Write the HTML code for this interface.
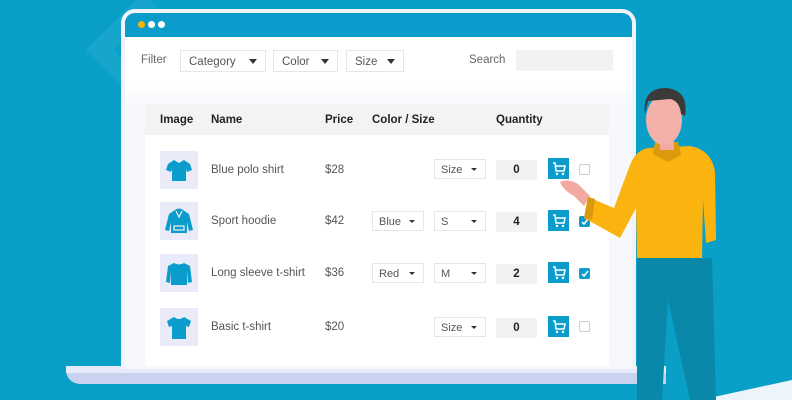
<!DOCTYPE html>
<html><head><meta charset="utf-8"><style>
*{margin:0;padding:0;box-sizing:border-box}
body{width:792px;height:400px;overflow:hidden;background:#099fc7;font-family:"Liberation Sans",sans-serif;position:relative}
.a{position:absolute}
.t{font-size:11.5px;color:#555}
.h{font-size:11.5px;font-weight:bold;color:#222}
.sel{position:absolute;height:20px;border:1px solid #e6e6e6;background:#fff;font-size:11px;color:#555;padding:4px 0 0 6px}
.sel:after{content:"";position:absolute;right:8px;top:8px;border-left:3px solid transparent;border-right:3px solid transparent;border-top:3px solid #333}
.big:after{border-left-width:4px;border-right-width:4px;border-top-width:5px;top:8px}
.qty{position:absolute;left:496px;width:41px;height:20px;background:#f2f2f2;font-size:11.5px;font-weight:bold;text-align:center;padding-top:4px;color:#222}
.cart{position:absolute;left:548px;width:21px;height:21px;background:#0a9ccb}
.img{position:absolute;left:160px;width:38px;height:38px;background:#e9ebf8}
.cb{position:absolute;left:579px;width:11px;height:11px;border:1px solid #ccc;border-radius:2px;background:#fff}
.cb.on{background:#0a9ccb;border-color:#0a9ccb}
</style></head><body>
<svg class="a" style="left:40px;top:0" width="240" height="140"><path d="M110 0 L60 50 L110 100 L160 50" fill="none" stroke="#2aadd1" stroke-width="20" opacity=".45"/></svg>
<div class="a" style="left:66px;top:366px;width:600px;height:18px;background:#c9d3f0;border-radius:0 0 0 14px"></div>
<div class="a" style="left:66px;top:366px;width:600px;height:7px;background:#e6eafa"></div>
<div class="a" style="left:121px;top:9px;width:515px;height:360px;background:#f0f3fb;border-radius:14px 14px 0 0"></div>
<div class="a" style="left:125px;top:13px;width:507px;height:24px;background:#0a9ccb;border-radius:10px 10px 0 0"></div>
<div class="a" style="left:138px;top:21px;width:7px;height:7px;border-radius:50%;background:#f4b400"></div>
<div class="a" style="left:148px;top:21px;width:7px;height:7px;border-radius:50%;background:#fff"></div>
<div class="a" style="left:158px;top:21px;width:7px;height:7px;border-radius:50%;background:#fff"></div>
<div class="a" style="left:125px;top:37px;width:507px;height:331px;background:linear-gradient(#fff 0,#fff 48px,#f6f8fc 70px)"></div>
<div class="a t" style="left:141px;top:54px;color:#666">Filter</div>
<div class="sel big" style="left:180px;top:50px;width:86px;height:22px;padding:5px 0 0 8px;font-size:11.5px">Category</div>
<div class="sel big" style="left:273px;top:50px;width:65px;height:22px;padding:5px 0 0 8px;font-size:11.5px">Color</div>
<div class="sel big" style="left:346px;top:50px;width:58px;height:22px;padding:5px 0 0 8px;font-size:11.5px">Size</div>
<div class="a t" style="left:469px;top:54px;color:#666">Search</div>
<div class="a" style="left:516px;top:50px;width:97px;height:21px;background:#f2f2f2"></div>
<div class="a" style="left:145px;top:104px;width:464px;height:262px;background:#fff"></div>
<div class="a" style="left:145px;top:104px;width:464px;height:31px;background:#f3f3f3"></div>
<div class="a h" style="left:160px;top:114px">Image</div>
<div class="a h" style="left:211px;top:114px">Name</div>
<div class="a h" style="left:325px;top:114px">Price</div>
<div class="a h" style="left:372px;top:114px">Color / Size</div>
<div class="a h" style="left:496px;top:114px">Quantity</div>

<div class="img" style="top:151px"><svg width="38" height="38"><path d="M14 9 L8 13 L6 19 L11 21 L12 18 L12 30 L26 30 L26 18 L27 21 L32 19 L30 13 L24 9 L19 12 Z" fill="#0a9ccb"/></svg></div>
<div class="img" style="top:202px"><svg width="38" height="38"><path d="M15 8 Q19 5 23 8 L29 12 L33 28 L29 29 L27 20 L27 31 L11 31 L11 20 L9 29 L5 28 L9 12 Z" fill="#0a9ccb"/><path d="M14 24 h10 v4 h-10z M16 9 L19 15 L22 9" fill="none" stroke="#e9ebf8" stroke-width="1.3"/></svg></div>
<div class="img" style="top:254px"><svg width="38" height="38"><path d="M14 9 L8 12 L6 28 L10 29 L11 17 L11 31 L27 31 L27 17 L28 29 L32 28 L30 12 L24 9 Q19 12 14 9Z" fill="#0a9ccb"/></svg></div>
<div class="img" style="top:308px"><svg width="38" height="38"><path d="M14 9 L7 13 L9 19 L12 18 L12 31 L26 31 L26 18 L29 19 L31 13 L24 9 Q19 13 14 9Z" fill="#0a9ccb"/></svg></div>

<div class="a t" style="left:211px;top:164px">Blue polo shirt</div><div class="a t" style="left:325px;top:164px">$28</div>
<div class="a t" style="left:211px;top:215px">Sport hoodie</div><div class="a t" style="left:325px;top:215px">$42</div>
<div class="a t" style="left:211px;top:267px">Long sleeve t-shirt</div><div class="a t" style="left:325px;top:267px">$36</div>
<div class="a t" style="left:211px;top:321px">Basic t-shirt</div><div class="a t" style="left:325px;top:321px">$20</div>

<div class="sel" style="left:434px;top:159px;width:52px">Size</div>
<div class="sel" style="left:372px;top:211px;width:52px">Blue</div><div class="sel" style="left:434px;top:211px;width:52px">S</div>
<div class="sel" style="left:372px;top:263px;width:52px">Red</div><div class="sel" style="left:434px;top:263px;width:52px">M</div>
<div class="sel" style="left:434px;top:317px;width:52px">Size</div>

<div class="qty" style="top:160px">0</div><div class="qty" style="top:212px">4</div><div class="qty" style="top:264px">2</div><div class="qty" style="top:318px">0</div>

<svg width="0" height="0" style="position:absolute"><defs><g id="c"><path d="M5 5 L7 5 L8 13 L16 13 L17 8 L8 8" fill="none" stroke="#fff" stroke-width="1.5"/><circle cx="9" cy="16" r="1.2" fill="#fff"/><circle cx="15" cy="16" r="1.2" fill="#fff"/></g></defs></svg>
<div class="cart" style="top:158px"><svg width="21" height="21"><use href="#c"/></svg></div>
<div class="cart" style="top:210px"><svg width="21" height="21"><use href="#c"/></svg></div>
<div class="cart" style="top:262px"><svg width="21" height="21"><use href="#c"/></svg></div>
<div class="cart" style="top:316px"><svg width="21" height="21"><use href="#c"/></svg></div>

<div class="cb" style="top:164px"></div>
<div class="cb on" style="top:216px"><svg width="9" height="9" class="a"><path d="M2 5 L4 7 L8 2" stroke="#fff" stroke-width="1.5" fill="none"/></svg></div>
<div class="cb on" style="top:268px"><svg width="9" height="9" class="a"><path d="M2 5 L4 7 L8 2" stroke="#fff" stroke-width="1.5" fill="none"/></svg></div>
<div class="cb" style="top:321px"></div>

<svg class="a" style="left:0;top:0" width="792" height="400">
<path d="M700 400 L792 380 L792 400Z" fill="#eef4fb"/>
<path d="M560 182 Q568 178 578 184 L590 196 L584 206 L574 196 Q563 190 560 182Z" fill="#f2a9a0"/>
<path d="M637 258 L712 258 L716 400 L690 400 L668 300 L662 400 L637 400Z" fill="#0a88aa"/>
<path d="M648 148 L690 146 Q712 150 715 172 L716 240 L706 243 L703 200 L702 258 L637 258 L636 208 L620 238 L584 218 L588 197 L614 208 L630 165 Q636 150 648 148Z" fill="#fbb40f"/>
<path d="M588 197 L584 218 L592 220 L595 199Z" fill="#d99a0c"/>
<path d="M655 142 L678 142 L681 155 L668 162 L653 154Z" fill="#d99a0c"/>
<path d="M660 136 L674 136 L674 150 L660 150Z" fill="#f2a9a0"/>
<ellipse cx="664" cy="120" rx="18" ry="25" fill="#f4b1a9"/>
<path d="M645 114 Q642 88 666 88 Q689 90 685 116 L681 114 Q680 101 670 99 L648 101Z" fill="#3a3a3a"/>
</svg>
</body></html>
